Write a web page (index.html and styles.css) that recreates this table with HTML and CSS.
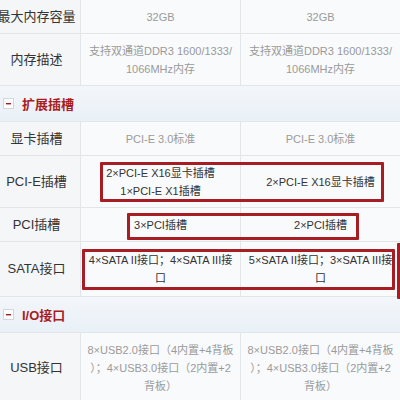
FILE: index.html
```html
<!DOCTYPE html>
<html lang="zh-CN">
<head>
  <meta charset="UTF-8" />
  <meta name="viewport" content="width=device-width, initial-scale=1.0" />
  <title>主板参数对比</title>
  <link rel="stylesheet" href="styles.css">
</head>
<body>
  <div class="sheet">
    <div class="spec-grid">
      <div class="label">最大内存容量</div>
      <div class="value">32GB</div>
      <div class="value">32GB</div>

      <div class="label">内存描述</div>
      <div class="value">支持双通道DDR3 1600/1333/<br>1066MHz内存</div>
      <div class="value">支持双通道DDR3 1600/1333/<br>1066MHz内存</div>

      <div class="section">
        <svg class="toggle" width="11" height="11" viewBox="0 0 11 11">
          <rect x="0.5" y="0.5" width="10" height="10" fill="#fff" stroke="#d3d7db"/>
          <rect x="3" y="5" width="5" height="1.4" fill="#a81c24"/>
        </svg>
        扩展插槽
      </div>

      <div class="label">显卡插槽</div>
      <div class="value">PCI-E 3.0标准</div>
      <div class="value">PCI-E 3.0标准</div>

      <div class="label">PCI-E插槽</div>
      <div class="value diff">2×PCI-E X16显卡插槽<br>1×PCI-E X1插槽</div>
      <div class="value diff">2×PCI-E X16显卡插槽</div>

      <div class="label">PCI插槽</div>
      <div class="value diff">3×PCI插槽</div>
      <div class="value diff">2×PCI插槽</div>

      <div class="label tall">SATA接口</div>
      <div class="value diff tall">4×SATA II接口；4×SATA III接<br>口</div>
      <div class="value diff tall">5×SATA II接口；3×SATA III接<br>口</div>

      <div class="section">
        <svg class="toggle" width="11" height="11" viewBox="0 0 11 11">
          <rect x="0.5" y="0.5" width="10" height="10" fill="#fff" stroke="#d3d7db"/>
          <rect x="3" y="5" width="5" height="1.4" fill="#a81c24"/>
        </svg>
        I/O接口
      </div>

      <div class="label">USB接口</div>
      <div class="value">8×USB2.0接口（4内置+4背板<br>）；4×USB3.0接口（2内置+2<br>背板）</div>
      <div class="value">8×USB2.0接口（4内置+4背板<br>）；4×USB3.0接口（2内置+2<br>背板）</div>
    </div>

    <!-- red markup boxes -->
    <div class="mark mark-pcie"></div>
    <div class="mark mark-pci"></div>
    <div class="mark mark-sata"></div>
    <div class="mark mark-edge"></div>
  </div>
</body>
</html>
```

FILE: styles.css
```css
* {
  margin: 0; padding: 0; box-sizing: border-box;
}
body {
  font-family: 'Liberation Sans', 'Noto Sans CJK SC', sans-serif;
  background: #fff;
  color: #333;
  overflow: hidden;
}
.sheet {
  position: relative;
  width: 400px;
  height: 400px;
  overflow: hidden;
}
.spec-grid {
  display: grid;
  grid-template-columns: 88px 160px 160px;
  margin-left: -7px;
}
.label, .value {
  display: flex;
  align-items: center;
  justify-content: center;
  text-align: center;
  padding: 8px 4px 7px;
  line-height: 18px;
  border-right: 1px solid #e1e6eb;
  border-bottom: 1px solid #e1e6eb;
}
.label {
  background: #f4f6f8;
  font-size: 13px;
  color: #333;
}
.value {
  background: #f9fafb;
  font-size: 11px;
  color: #9a9a9a;
}
.value.diff {
  color: #333;
}
.tall {
  padding-top: 9px;
  padding-bottom: 9px;
}
.section {
  grid-column: 1 / -1;
  display: flex;
  align-items: center;
  gap: 8px;
  height: 36px;
  padding-left: 10px;
  background: linear-gradient(to bottom, #f3f6fa, #e9f0f7);
  border-bottom: 1px solid #e1e6eb;
  font-size: 13px;
  font-weight: bold;
  color: #a81c24;
}
.toggle {
  display: block;
}

/* annotation boxes over the table */
.mark {
  position: absolute;
  border: 3px solid #a81c24;
  border-radius: 1px;
}
.mark-pcie { left: 100px; top: 162px; width: 284px; height: 40px; }
.mark-pci  { left: 127px; top: 213px; width: 232px; height: 27px; }
.mark-sata { left: 82px;  top: 249px; width: 313px; height: 41px; }
.mark-edge { left: 397px; top: 243px; width: 10px;  height: 56px; }
```
